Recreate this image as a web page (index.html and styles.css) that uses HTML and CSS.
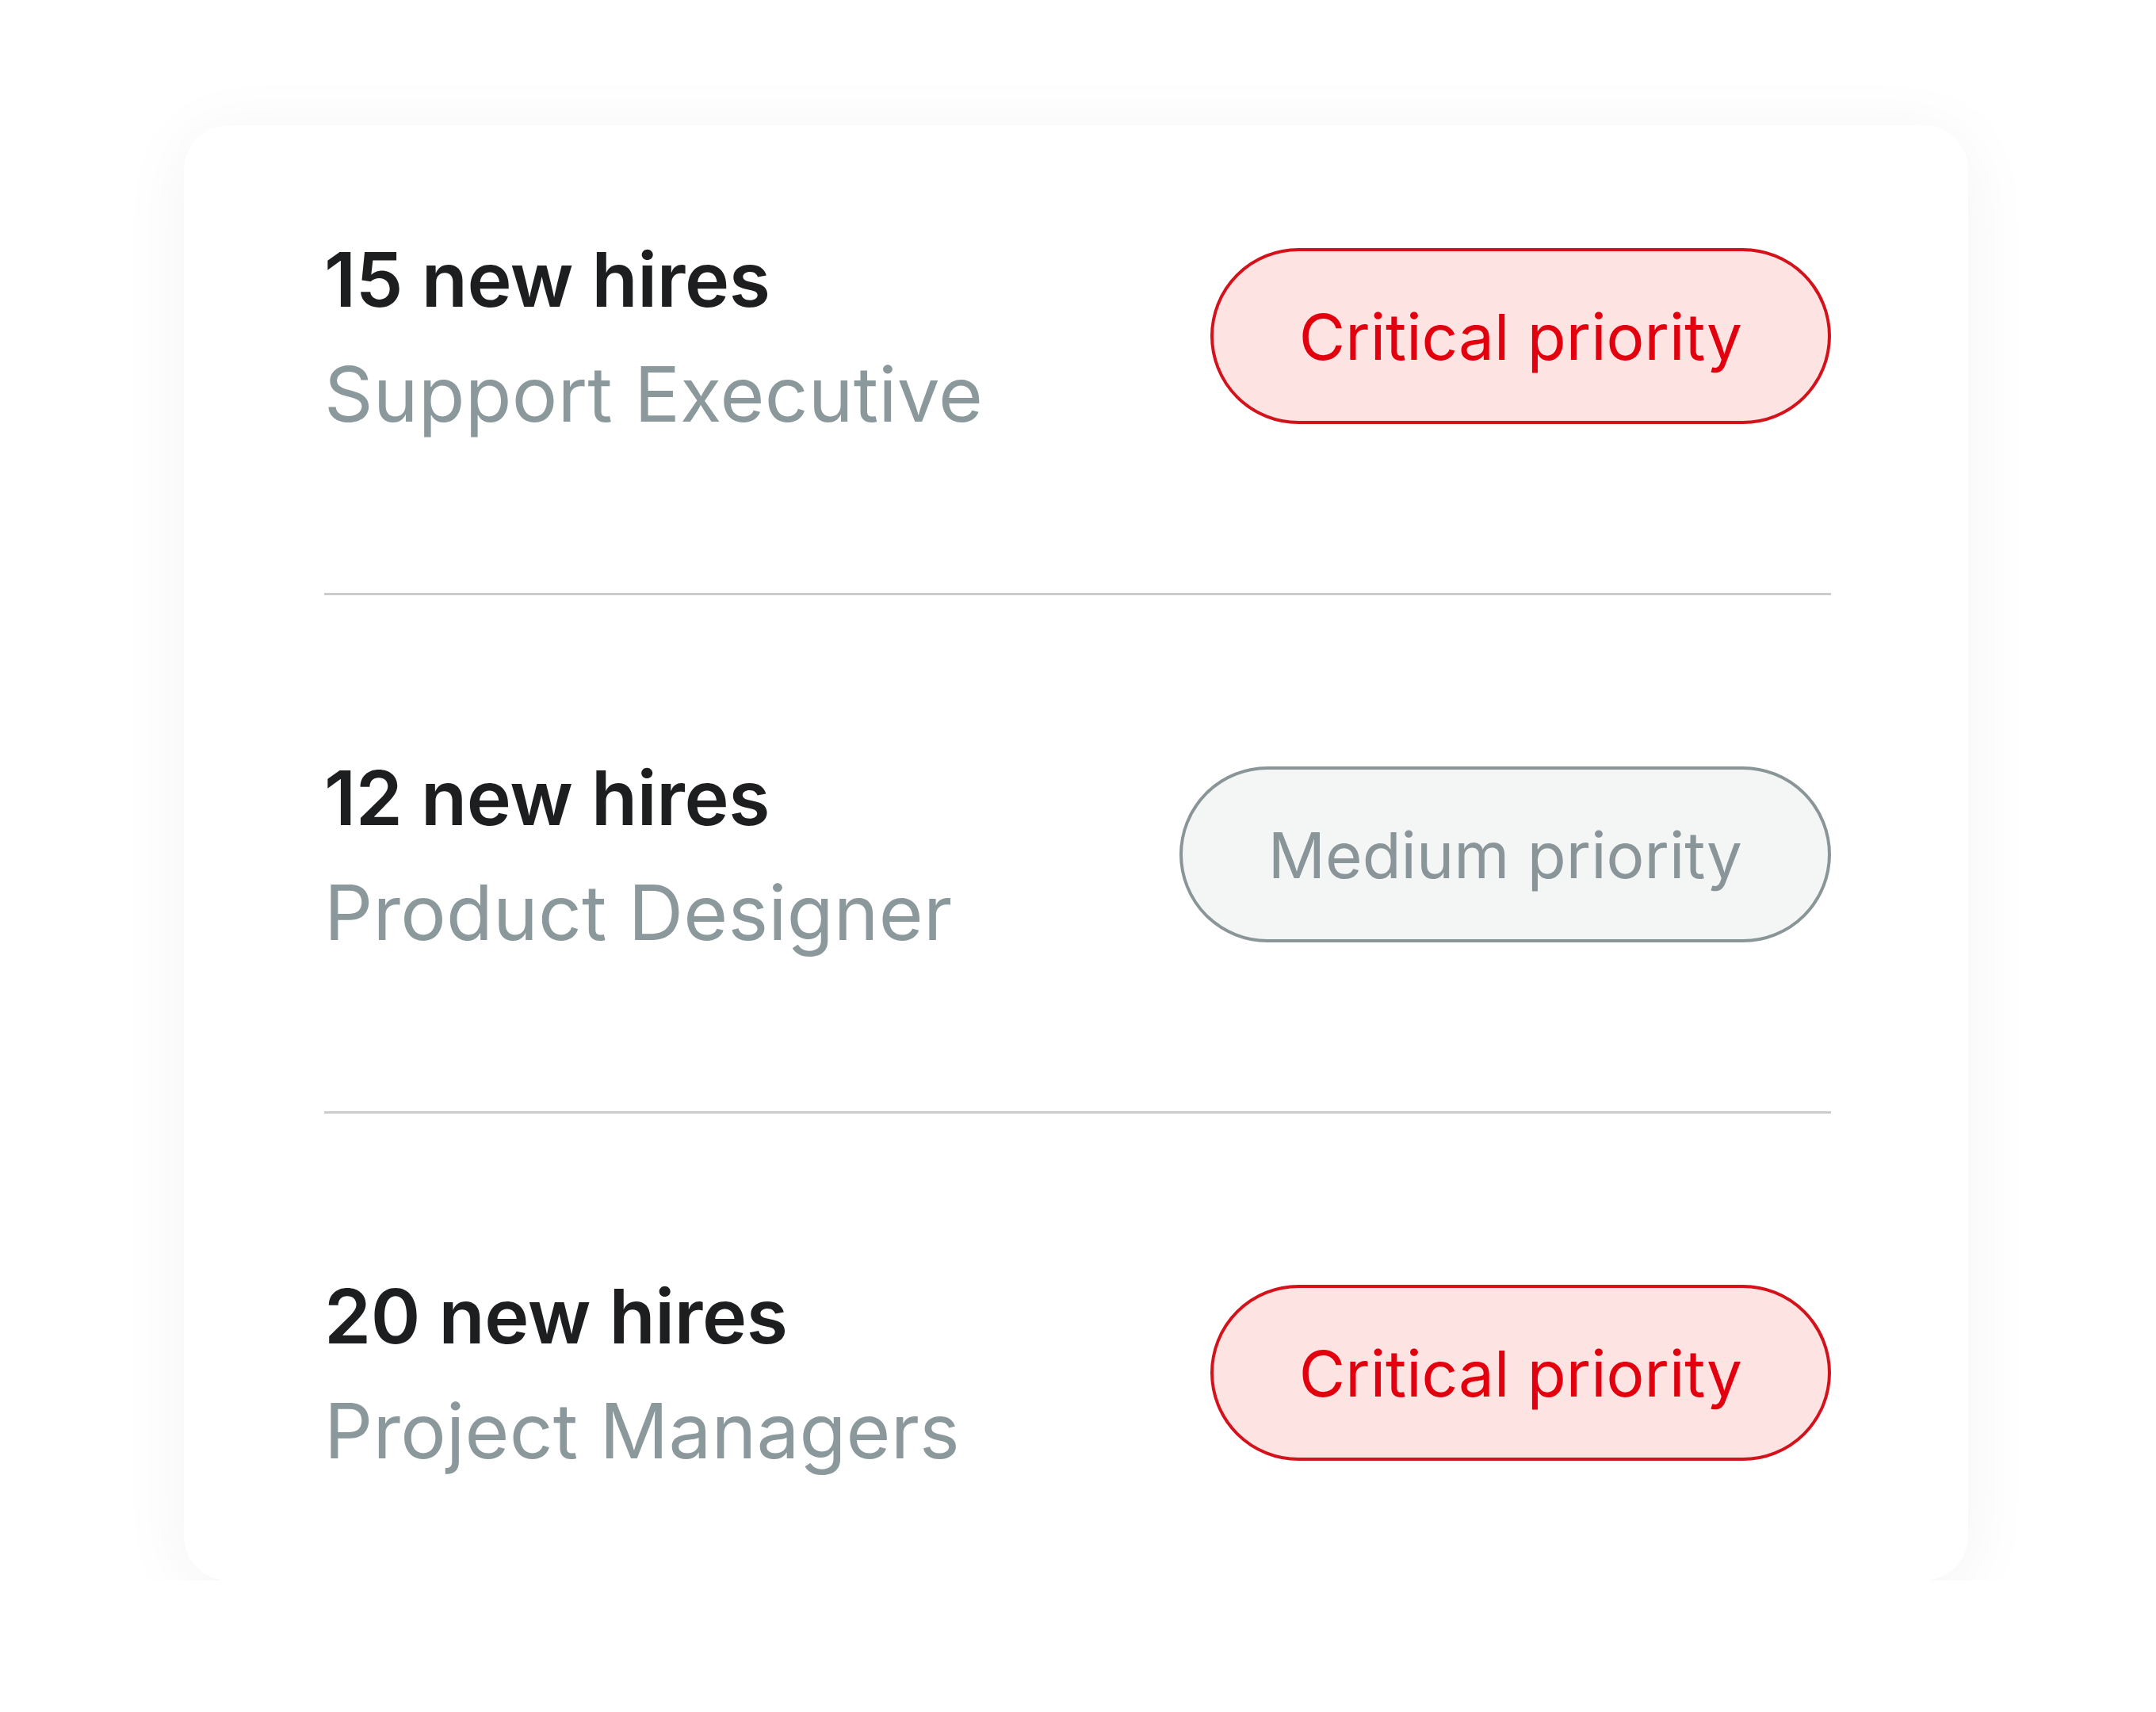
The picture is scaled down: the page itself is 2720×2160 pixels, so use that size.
FILE: index.html
```html
<!DOCTYPE html>
<html lang="en">
<head>
<meta charset="utf-8">
<title>Hiring priorities</title>
<link rel="stylesheet" href="styles.css">
</head>
<body>
<main class="page">
  <section class="card">
    <div class="row row-first">
      <div class="info">
        <div class="title">15 new hires</div>
        <div class="role">Support Executive</div>
      </div>
      <span class="badge badge-critical">Critical priority</span>
    </div>
    <div class="row">
      <div class="info">
        <div class="title">12 new hires</div>
        <div class="role">Product Designer</div>
      </div>
      <span class="badge badge-medium">Medium priority</span>
    </div>
    <div class="row row-last">
      <div class="info">
        <div class="title">20 new hires</div>
        <div class="role">Project Managers</div>
      </div>
      <span class="badge badge-critical">Critical priority</span>
    </div>
  </section>
</main>
</body>
</html>
```

FILE: styles.css
```css
html, body {
  margin: 0;
  padding: 0;
  background: #ffffff;
}

body {
  font-family: Inter, "Noto Sans", "Liberation Sans", sans-serif;
}

.page {
  padding: 158px 0 0 232px;
}

.card {
  width: 2251px;
  box-sizing: border-box;
  background: #ffffff;
  border-radius: 56px;
  box-shadow: 0 12px 90px rgba(0, 0, 0, 0.05);
  padding: 0 173px 0 177px;
}

.row {
  display: flex;
  justify-content: space-between;
  align-items: center;
  padding: 199px 0 196px;
  border-bottom: 3px solid #cccccc;
}

.row-first {
  padding-top: 138px;
}

.row-last {
  padding-bottom: 134px;
  border-bottom: none;
}

.info {
  display: flex;
  flex-direction: column;
  gap: 32px;
}

.title {
  font-size: 95px;
  line-height: 114px;
  font-weight: 600;
  color: #1c1e20;
  letter-spacing: -0.4px;
}

.role {
  font-size: 96px;
  line-height: 110px;
  font-weight: 400;
  color: #8b999c;
  letter-spacing: 0.2px;
}

.badge {
  box-sizing: border-box;
  height: 222px;
  display: inline-flex;
  align-items: center;
  padding: 0 108px;
  border-radius: 111px;
  font-size: 80px;
  font-weight: 400;
  letter-spacing: 0;
  white-space: nowrap;
}

.badge-critical {
  background: #fde3e1;
  border: 4px solid #d4121b;
  color: #e2000f;
}

.badge-medium {
  background: #f4f6f6;
  border: 4px solid #8a9597;
  color: #899598;
}
```
